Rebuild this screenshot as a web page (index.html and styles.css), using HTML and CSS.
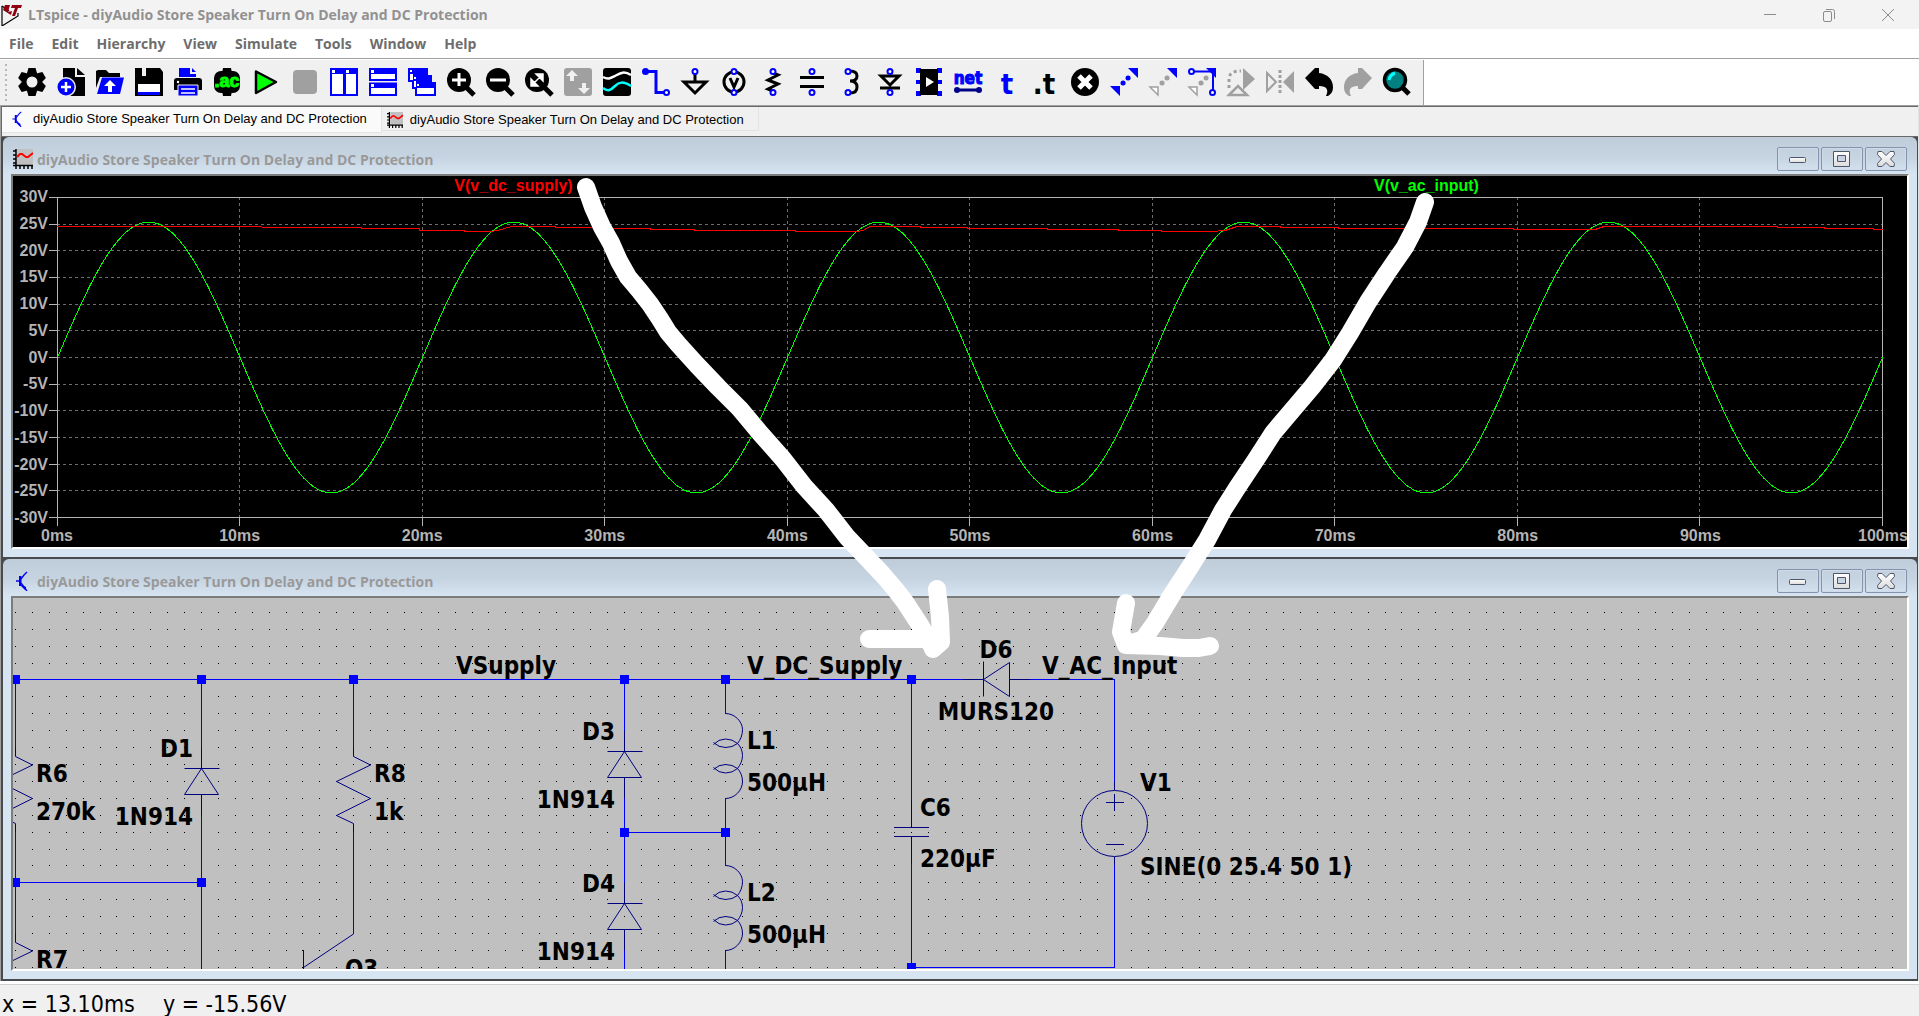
FILE: index.html
```html
<!DOCTYPE html>
<html lang="en">
<head>
<meta charset="utf-8">
<title>LTspice - diyAudio Store Speaker Turn On Delay and DC Protection</title>
<link rel="stylesheet" href="styles.css">
</head>
<body>
<svg class="defs" aria-hidden="true">
  <defs>
    <linearGradient id="glyph" x1="0" y1="0" x2="0" y2="1"><stop offset="0" stop-color="#fff"/><stop offset="1" stop-color="#dcdcdc"/></linearGradient>
    <symbol id="schematic-icon" viewBox="0 0 20 20"><path d="M3 10h4M8 8l3-4 3-3M8 12l3 4 3 4" fill="none" stroke="#0000f0" stroke-width="1.300"/><path d="M6 5h2.500v10H6zM9 14l4 2v3h-1l-4-4z" fill="#0000f0"/></symbol>
    <symbol id="plot-icon" viewBox="0 0 20 20"><path d="M4 0h16v16H4z" fill="#c0c0c0"/><path d="M3 0v20M0 16.500h20M0 2h3M0 6h3M0 10h3M0 14h3M7 17v3M11 17v3M15 17v3M19 17v3" fill="none" stroke="#000" stroke-width="1.500"/><path d="M4 8l3-3h2l4 3h2l5-4" fill="none" stroke="#f00" stroke-width="2"/></symbol>
    <symbol id="min-icon" viewBox="0 0 42 24"><rect x="12.500" y="10.500" width="16" height="5" rx="1" fill="url(#glyph)" stroke="#4f566b"/></symbol>
    <symbol id="max-icon" viewBox="0 0 42 24"><path fill-rule="evenodd" d="M12.500 4.500h16v15h-16zM16.500 8.500v6h8v-6z" fill="url(#glyph)" stroke="#4f566b"/></symbol>
    <symbol id="close-icon" viewBox="0 0 42 24"><path d="M13 4.500h4l4 4 4-4h4l.5 3-4 4.500 4 4.500-.5 3h-4l-4-4-4 4h-4l-.5-3 4-4.500-4-4.500z" fill="url(#glyph)" stroke="#4f566b"/></symbol>
  </defs>
</svg>

<header class="titlebar">
  <svg class="logo" viewBox="0 0 22 22" aria-hidden="true"><path d="M1 2v20L17 12V9" fill="none" stroke="#000" stroke-width="1.200"/><path d="M1 2l7 5" stroke="#000" stroke-width="1.200"/><path d="M4 1h5L7 8l4-1-1 4-8-5zM11 1h10l-1 3h-3l-3 8h-3l3-8h-4z" fill="#900010"/></svg>
  <h1>LTspice - diyAudio Store Speaker Turn On Delay and DC Protection</h1>
  <div class="window-controls">
    <button aria-label="Minimize"><svg viewBox="0 0 14 14"><path d="M1 6.500h12"/></svg></button>
    <button aria-label="Restore"><svg viewBox="0 0 14 14"><rect x="1.500" y="3.500" width="8" height="10" rx="1.500"/><path d="M4 1.500h6.500a2 2 0 0 1 2 2V11"/></svg></button>
    <button aria-label="Close"><svg viewBox="0 0 14 14"><path d="M1 1l12 12M13 1L1 13"/></svg></button>
  </div>
</header>

<nav class="menubar">
  <button>File</button><button>Edit</button><button>Hierarchy</button><button>View</button><button>Simulate</button><button>Tools</button><button>Window</button><button>Help</button>
</nav>

<div class="toolbar-row">
<div class="toolbar" role="toolbar" aria-label="Main">
  <span class="grip"></span>
  <button aria-label="Settings"><svg viewBox="0 0 28 28"><g id="cog"><path d="M9 5l1.500-5h7L19 5v18l-1.500 5h-7L9 23z"/><path transform="rotate(60 14 14)" d="M9 5l1.500-5h7L19 5v18l-1.500 5h-7L9 23z"/><path transform="rotate(120 14 14)" d="M9 5l1.500-5h7L19 5v18l-1.500 5h-7L9 23z"/></g><circle cx="14" cy="14" r="5.500" fill="#f0f0f0"/></svg></button>
  <button aria-label="New schematic"><svg viewBox="0 0 28 28"><path d="M6 0h12v9h10v19H6zM20 0l8 7h-8z"/><circle cx="9" cy="19" r="10" fill="#f0f0f0"/><circle cx="9" cy="19" r="8.500" fill="#00f"/><path d="M9 14v10M4 19h10" stroke="#fff" stroke-width="2.500"/></svg></button>
  <button aria-label="Open"><svg viewBox="0 0 28 28"><path d="M0 3l2-1h8l3 3h11v4H4L0 20z"/><path d="M6 9.500h22L24 26H1z" fill="#00f"/><path d="M14 12l6 6h-4v6h-4v-6H8z" fill="#fff"/></svg></button>
  <button aria-label="Save"><svg viewBox="0 0 28 28"><path d="M0 0h25l3 4v24H0z"/><path d="M7 0h4v8H7z" fill="#f0f0f0"/><path d="M3 16h22v8H3z" fill="#fff"/><path d="M3 24h22v3H3z" fill="#00f"/></svg></button>
  <button aria-label="Print"><svg viewBox="0 0 28 28"><path d="M5 0h11v6h6v3H5zM18 0l4 4h-4z" fill="#00f"/><path d="M0 13q0-3 3-3h22q3 0 3 3v9H0z"/><circle cx="4" cy="14" r="1.200" fill="#fff"/><path d="M4 17h20v11H4z" fill="#00f" stroke="#f0f0f0"/><path d="M7 21h14M7 25h14" stroke="#fff" stroke-width="1.500"/></svg></button>
  <button aria-label="Configure analysis"><svg viewBox="0 0 28 28"><path d="M9 5l1-5h8l1 5v18l-1 5h-8l-1-5z"/><rect x="1" y="3" width="26" height="22" rx="7"/><text x="14" y="19" class="ac" text-anchor="middle">.ac</text></svg></button>
  <button aria-label="Run"><svg viewBox="0 0 28 28"><path d="M4 3.500L24 14 4 25z" fill="#0f0" stroke="#000" stroke-width="2.500" stroke-linejoin="round"/></svg></button>
  <button aria-label="Stop"><svg viewBox="0 0 28 28"><rect x="2" y="2" width="24" height="24" rx="4" fill="#a0a0a0"/></svg></button>
  <button aria-label="Tile vertically"><svg viewBox="0 0 28 28"><path d="M0 0h28v28H0z" fill="#00f"/><path d="M2 6h11v20H2zM16 6h10v20H16zM2 2h3v3H2zM16 2h3v3h-3z" fill="#fff"/></svg></button>
  <button aria-label="Tile horizontally"><svg viewBox="0 0 28 28"><path d="M0 0h28v28H0z" fill="#00f"/><path d="M0 13h28v1.500H0z" fill="#f0f0f0"/><path d="M2 6h24v5H2zM2 20h24v6H2zM2 2h3v3H2zM2 16h3v3H2z" fill="#fff"/></svg></button>
  <button aria-label="Cascade"><svg viewBox="0 0 28 28"><path d="M0 0h20v7h4v7h4v14H7v-7H4v-7H0z" fill="#00f"/><path d="M2 2h2v2H2zM2 6h3v6H2zM6 9h2v2H6zM6 13h2v6H6zM9 16h2v2H9zM9 20h17v6H9z" fill="#fff"/></svg></button>
  <button aria-label="Zoom in"><svg viewBox="0 0 28 28"><path d="M17 17l10 10" stroke="#000" stroke-width="5"/><circle cx="12" cy="12" r="12"/><path d="M12 5v13M5 12h14" stroke="#fff" stroke-width="3"/></svg></button>
  <button aria-label="Zoom out"><svg viewBox="0 0 28 28"><path d="M17 17l10 10" stroke="#000" stroke-width="5"/><circle cx="12" cy="12" r="12"/><path d="M4 12h16" stroke="#fff" stroke-width="3"/></svg></button>
  <button aria-label="Zoom to fit"><svg viewBox="0 0 28 28"><path d="M17 17l10 10" stroke="#000" stroke-width="5"/><circle cx="12" cy="12" r="12"/><path d="M8 16l8-8M11 6h7v7zM6 11v7h7z" stroke="#fff" stroke-width="1.500" fill="#fff"/></svg></button>
  <button aria-label="Autorange"><svg viewBox="0 0 28 28"><rect width="28" height="28" rx="3" fill="#a0a0a0"/><path d="M8 2l6 6H10v5H6V8H2zM20 26l-6-6h4v-5h4v5h4z" fill="#f0f0f0"/></svg></button>
  <button aria-label="Waveform"><svg viewBox="0 0 28 28"><rect width="28" height="28" rx="3"/><path d="M0 9c5 3 8 1 12-1s8-6 16-1" fill="none" stroke="#fff" stroke-width="2.500"/><path d="M0 20c5 4 8 2 12-2s8-5 16 0" fill="none" stroke="#0ff" stroke-width="2.500"/></svg></button>
  <button aria-label="Wire"><svg viewBox="0 0 28 28"><path d="M4 3.500h10v21h8" fill="none" stroke="#00f" stroke-width="3"/><circle cx="3.500" cy="3.500" r="3.500" fill="#00f"/><circle cx="24.500" cy="24.500" r="2.500" class="pin"/></svg></button>
  <button aria-label="Ground"><svg viewBox="0 0 28 28"><path d="M14 5v9M3 14h22L14 25z" class="k"/><circle cx="14" cy="3.500" r="2.500" class="pin"/></svg></button>
  <button aria-label="Voltage source"><svg viewBox="0 0 28 28"><circle cx="14" cy="14" r="10" class="k"/><path d="M10 10l4 9 4-9" class="k"/><circle cx="14" cy="3.500" r="2.500" class="pin"/><circle cx="14" cy="24.500" r="2.500" class="pin"/></svg></button>
  <button aria-label="Resistor"><svg viewBox="0 0 28 28"><path d="M14 5l5 2-10 5 10 4-10 5 5 2" class="k"/><circle cx="14" cy="3.500" r="2.500" class="pin"/><circle cx="14" cy="24.500" r="2.500" class="pin"/></svg></button>
  <button aria-label="Capacitor"><svg viewBox="0 0 28 28"><path d="M2 9.500h24M2 18.500h24" class="k"/><circle cx="14" cy="3.500" r="2.500" class="pin"/><circle cx="14" cy="24.500" r="2.500" class="pin"/></svg></button>
  <button aria-label="Inductor"><svg viewBox="0 0 28 28"><path d="M13 3q7 0 7 5t-7 5q7 0 7 6t-7 6" class="k"/><circle cx="11" cy="3.500" r="2.500" class="pin"/><circle cx="11" cy="24.500" r="2.500" class="pin"/></svg></button>
  <button aria-label="Diode"><svg viewBox="0 0 28 28"><path d="M5 8h18l-9 9zM4 20h20" class="k"/><circle cx="14" cy="3.500" r="2.500" class="pin"/><circle cx="14" cy="24.500" r="2.500" class="pin"/></svg></button>
  <button aria-label="Component"><svg viewBox="0 0 28 28"><path d="M1 0h5v5H1zM22 0h5v5h-5zM1 12h5v4H1zM22 12h5v4h-5zM1 23h5v5H1zM22 23h5v5h-5z" fill="#00f"/><path d="M5 1h18v26H5z"/><path d="M11 9l8 5-8 5z" fill="#fff"/></svg></button>
  <button aria-label="Label net"><svg viewBox="0 0 28 28"><text x="14" y="16" class="net" text-anchor="middle">net</text><path d="M3 22h22" stroke="#00008b" stroke-width="3"/><circle cx="3" cy="22" r="3" fill="#00008b"/><circle cx="25" cy="22" r="3" fill="#00008b"/></svg></button>
  <button aria-label="Text"><svg viewBox="0 0 28 28"><text x="14" y="26" class="tee blue" text-anchor="middle">t</text></svg></button>
  <button aria-label="SPICE directive"><svg viewBox="0 0 28 28"><text x="12" y="26" class="tee" text-anchor="middle">.t</text></svg></button>
  <button aria-label="Delete"><svg viewBox="0 0 28 28"><circle cx="14" cy="14" r="14"/><path d="M8 8l12 12M20 8L8 20" stroke="#fff" stroke-width="5"/></svg></button>
  <button aria-label="Move"><svg viewBox="0 0 28 28"><path d="M18 0h10v10zM0 18h10v10z" fill="#00f"/><path d="M13 15h.1M18 10h.1" stroke="#00f" stroke-width="5" stroke-linecap="round"/></svg></button>
  <button aria-label="Drag"><svg viewBox="0 0 28 28"><path d="M18 0h10v10z" fill="#00f"/><path d="M1 19h8v8z" fill="#fff" stroke="#a0a0a0" stroke-width="1.500"/><path d="M13 15h.1M18 10h.1" stroke="#a0a0a0" stroke-width="5" stroke-linecap="round"/></svg></button>
  <button aria-label="Stretch"><svg viewBox="0 0 28 28"><path d="M18 0h10v10z" fill="#00f"/><path d="M4 3.500h21v21" fill="none" stroke="#00f" stroke-width="2"/><circle cx="3.500" cy="3.500" r="2.500" class="pin"/><circle cx="24.500" cy="24.500" r="2.500" class="pin"/><path d="M1 19h8v8z" fill="#fff" stroke="#a0a0a0" stroke-width="1.500"/><path d="M13 15h.1M18 10h.1" stroke="#a0a0a0" stroke-width="5" stroke-linecap="round"/></svg></button>
  <button aria-label="Rotate"><svg viewBox="0 0 28 28"><path d="M16 0l12 11-12 11z" fill="#a0a0a0"/><path d="M2 27l9-9 9 9z" fill="none" stroke="#a0a0a0" stroke-width="2.500"/><path d="M2 20v-9q0-8 12-8" fill="none" stroke="#a0a0a0" stroke-width="3" stroke-dasharray="3 3"/></svg></button>
  <button aria-label="Mirror"><svg viewBox="0 0 28 28"><path d="M28 3v22L17 14z" fill="#a0a0a0"/><path d="M1 5v18l9-9z" fill="none" stroke="#a0a0a0" stroke-width="2"/><path d="M14 2v25" stroke="#a0a0a0" stroke-width="3" stroke-dasharray="3 2"/></svg></button>
  <button aria-label="Undo"><svg viewBox="0 0 28 28"><path id="undo" d="M0 10L10 0h4v5c9 1 14 7 14 14 0 5-2 7-5 9h-2c3-6 1-10-7-10v3h-4z"/></svg></button>
  <button aria-label="Redo"><svg viewBox="0 0 28 28"><use href="#undo" transform="matrix(-1 0 0 1 28 0)" fill="#a0a0a0"/></svg></button>
  <button aria-label="Find"><svg viewBox="0 0 28 28"><path d="M17 17l9 9" stroke="#000" stroke-width="5"/><circle cx="12" cy="12" r="10.500" fill="#008080" stroke="#000" stroke-width="3.500"/><path d="M6 12q1-5 6-7" fill="none" stroke="#0ff" stroke-width="3"/></svg></button>
</div>
</div>

<main class="workspace">
  <div class="tabs" role="tablist">
    <button class="tab active" role="tab" aria-selected="true"><svg class="tab-icon"><use href="#schematic-icon"/></svg>diyAudio Store Speaker Turn On Delay and DC Protection</button>
    <button class="tab" role="tab"><svg class="tab-icon"><use href="#plot-icon"/></svg>diyAudio Store Speaker Turn On Delay and DC Protection</button>
  </div>

  <div class="mdi">
    <section class="window">
      <header class="caption">
        <svg class="caption-icon"><use href="#plot-icon"/></svg>
        <h2>diyAudio Store Speaker Turn On Delay and DC Protection</h2>
        <button aria-label="Minimize"><svg><use href="#min-icon"/></svg></button>
        <button aria-label="Maximize"><svg><use href="#max-icon"/></svg></button>
        <button aria-label="Close"><svg><use href="#close-icon"/></svg></button>
      </header>
      <div class="client plot">
        <div class="traces"><span class="trace-dc">V(v_dc_supply)</span><span class="trace-ac">V(v_ac_input)</span></div>
        <ol class="y-axis"><li>30V</li><li>25V</li><li>20V</li><li>15V</li><li>10V</li><li>5V</li><li>0V</li><li>-5V</li><li>-10V</li><li>-15V</li><li>-20V</li><li>-25V</li><li>-30V</li></ol>
        <svg class="graph" viewBox="0 0 1826 321" preserveAspectRatio="none">
          <path id="grid" class="grid-lines"/>
          <path id="ticks" class="frame"/>
          <path class="frame" d="M.5.5h1825v320H.5z"/>
          <path id="sine" class="sine"/>
          <path class="dc" d="M0 29.500H200L210 30.500H304V31.500H362V33.500H407V34.500H434L440 33.500 455 29.500H498V30.500H554V31.500H593V32.500H637V33.500H738V34.500H800L806 33.500 813 29.500H863V30.500H910V31.500H990V32.500H1061V33.500H1104V34.500H1155L1168 33.500 1180 29.500H1223V30.500H1281V31.500H1456V32.500H1538L1547 29.500H1720V30.500H1767V31.500H1816V32.500H1826"/>
        </svg>
        <ol class="x-axis"><li>0ms</li><li>10ms</li><li>20ms</li><li>30ms</li><li>40ms</li><li>50ms</li><li>60ms</li><li>70ms</li><li>80ms</li><li>90ms</li><li>100ms</li></ol>
      </div>
    </section>

    <section class="window">
      <header class="caption">
        <svg class="caption-icon"><use href="#schematic-icon"/></svg>
        <h2>diyAudio Store Speaker Turn On Delay and DC Protection</h2>
        <button aria-label="Minimize"><svg><use href="#min-icon"/></svg></button>
        <button aria-label="Maximize"><svg><use href="#max-icon"/></svg></button>
        <button aria-label="Close"><svg><use href="#close-icon"/></svg></button>
      </header>
      <div class="client schematic">
        <svg class="sheet">
          <defs>
            <path id="diode" d="M0-21V0M-17 0H18M0 0L-17 26H17zM0 26V47"/>
            <path id="resistor" d="M0-9V0L17 8.500-17 25 17 42-17 59 0 67V76"/>
            <path id="inductor" d="M0 0C9 0 17 8 17 16 17 22 15 26 12 30Q7 34 0 34-7 34-12 29M-12 31Q-7 25.500 0 25.500 7 25.500 12 30C15 33 17 37 17 42 17 47 15 51 12 55Q7 59.500 0 59.500-7 59.500-12 54M-12 56Q-7 51 0 51 7 51 12 55C15 58 17 63 17 68 17 77 9 85 0 85"/>
          </defs>
          <path id="dots" class="dots"/>
          <g transform="translate(-13 -598)">
            <g class="wires">
              <path d="M15 679.500H963M1030 679.500H1114.500V782M1114.500 865V967.500H911.500V864M911.500 679.500V800M15.500 679V748M15.500 832V934M201.500 679V748M201.500 815V969M15 882.500H201M353.500 679V748M353.500 832V934M624.500 679V731M624.500 798V883M624.500 950V969M725.500 679V714M725.500 798V866M725.500 951V969M624 832.500H725"/>
            </g>
            <g class="parts">
              <use href="#diode" x="201.500" y="768.500"/><use href="#diode" x="624.500" y="751.500"/><use href="#diode" x="624.500" y="903.500"/>
              <use href="#diode" transform="translate(983.500 679.500) rotate(-90)"/>
              <use href="#resistor" x="15.500" y="756.500"/><use href="#resistor" x="353.500" y="756.500"/><use href="#resistor" x="15.500" y="942.500"/>
              <use href="#inductor" x="725.500" y="713.500"/><use href="#inductor" x="725.500" y="865.500"/>
              <path d="M353.500 934L303.500 967.500M303.500 950V980M911.500 800V827.500M894 827.500H929M894 836.500H929M911.500 836.500V864M1114.500 782V790M1114.500 857V865M1106 802.500H1124M1114.500 794V811M1106 844.500H1124"/>
              <circle cx="1114.500" cy="823.500" r="33"/>
            </g>
            <path class="nodes" d="M11 675h9v9h-9zM197 675h9v9h-9zM349 675h9v9h-9zM620 675h9v9h-9zM721 675h9v9h-9zM907 675h9v9h-9zM11 878h9v9h-9zM197 878h9v9h-9zM620 828h9v9h-9zM721 828h9v9h-9zM907 963h9v9h-9z"/>
            <g class="labels">
              <text x="456" y="674">VSupply</text><text x="747" y="674">V_DC_Supply</text><text x="1042" y="674">V_AC_Input</text>
              <text x="193" y="757" text-anchor="end">D1</text><text x="193" y="825" text-anchor="end">1N914</text>
              <text x="615" y="740" text-anchor="end">D3</text><text x="615" y="808" text-anchor="end">1N914</text>
              <text x="615" y="892" text-anchor="end">D4</text><text x="615" y="960" text-anchor="end">1N914</text>
              <text x="36" y="782">R6</text><text x="36" y="820">270k</text><text x="36" y="968">R7</text>
              <text x="374" y="782">R8</text><text x="374" y="820">1k</text><text x="345" y="977">Q3</text>
              <text x="747" y="749">L1</text><text x="747" y="791">500µH</text><text x="747" y="901">L2</text><text x="747" y="943">500µH</text>
              <text x="920" y="816">C6</text><text x="920" y="867">220µF</text>
              <text x="996" y="658" text-anchor="middle">D6</text><text x="996" y="720" text-anchor="middle">MURS120</text>
              <text x="1140" y="791">V1</text><text x="1140" y="875">SINE(0 25.4 50 1)</text>
            </g>
          </g>
        </svg>
      </div>
    </section>
  </div>
</main>

<footer class="status"><span>x = 13.10ms</span><span>y = -15.56V</span></footer>

<svg class="annotations" viewBox="0 0 1919 1016" preserveAspectRatio="none" aria-hidden="true">
  <path d="M586 187L593 207 602 227 611 243 619 261 628 277 639 290 650 304 660 319 668 332 678 344 697 365 718 387 740 409 760 433 783 459 804 486 826 510 847 537 868 559 883 575 895 589 905 602 920 625 933 648M937 589L940 617 941 642 933 649M869 639H925L941 642"/>
  <path d="M1425 202L1418 222 1405 247 1387 273 1368 302 1350 333 1333 360 1312 387 1295 407 1273 433 1255 461 1237 488 1223 510 1207 540 1190 567 1173 593 1155 623 1142 641M1126 603L1121 632 1126 645 1160 646 1183 648 1199 648 1210 646M1128 644L1148 638"/>
</svg>
<script src="script.js"></script>
</body>
</html>
```
FILE: styles.css
```css
* { box-sizing: border-box; }

body {
  margin: 0;
  height: 100vh;
  display: flex;
  flex-direction: column;
  overflow: hidden;
  position: relative;
  background: #f0f0f0;
  font-family: "Open Sans", "Noto Sans", sans-serif;
  font-size: 14px;
}

button {
  border: 0;
  padding: 0;
  background: none;
  font: inherit;
  color: inherit;
}

h1, h2 { margin: 0; font-size: 14px; font-weight: 700; line-height: 20px; white-space: nowrap; }
ol { list-style: none; margin: 0; padding: 0; }
svg { display: block; }
.defs { position: absolute; width: 0; height: 0; }

/* Application title and menu */
.titlebar {
  flex: none;
  height: 29px;
  display: flex;
  align-items: center;
  gap: 5px;
  padding-left: 1px;
  background: #f3f3f3;
  color: #919191;
}
.logo { width: 22px; height: 22px; }
.window-controls { margin-left: auto; display: flex; padding-right: 2px; }
.window-controls button { width: 59px; display: grid; place-items: center; }
.window-controls svg { width: 14px; height: 14px; fill: none; stroke: #8c8c8c; }

.menubar {
  flex: none;
  height: 30px;
  display: flex;
  background: #fff;
  border-bottom: 1px solid #a0a0a0;
  color: #6d6d6d;
  font-weight: 700;
}
.menubar button { padding: 0 9px; }

/* Toolbar */
.toolbar-row { flex: none; display: flex; padding-top: 1px; background: #fff; }
.toolbar {
  height: 45px;
  display: flex;
  align-items: center;
  gap: 11px;
  padding: 0 12px 1px 5px;
  background: #f0f0f0;
  border-right: 1px solid #a0a0a0;
}
.toolbar button { width: 28px; height: 28px; }
.toolbar svg { width: 28px; height: 28px; overflow: visible; }
.grip { width: 2px; height: 37px; background: repeating-linear-gradient(#b8b8b8 0 2px, transparent 2px 5px); }
.k { fill: none; stroke: #000; stroke-width: 3; }
.pin { fill: #fff; stroke: #00f; stroke-width: 2; }
.ac { font: 700 18px "Liberation Sans", sans-serif; fill: #0f0; stroke: #0f0; }
.net { font: 700 17px "DejaVu Sans Condensed", "DejaVu Sans", sans-serif; fill: #00f; stroke: #00f; }
.tee { font: 700 29px "DejaVu Sans Condensed", "DejaVu Sans", sans-serif; }
.blue { fill: #00f; }

/* Workspace */
.workspace {
  flex: 1;
  min-height: 0;
  display: flex;
  flex-direction: column;
  border-top: 1px solid #a0a0a0;
  border-left: 1px solid #a0a0a0;
  border-right: 1px solid #e3e3e3;
}
.tabs {
  flex: none;
  height: 31px;
  display: flex;
  align-items: flex-start;
  border-top: 1px solid #696969;
  border-left: 1px solid #696969;
  border-bottom: 1px solid #696969;
  font: 13px/20px "Liberation Sans", Arial, sans-serif;
}
.tab {
  height: 24px;
  display: flex;
  align-items: center;
  gap: 7px;
  padding: 3px 14px 0 5px;
  border: 1px solid #e3e3e3;
  border-width: 0 1px 1px 0;
  white-space: nowrap;
}
.tab.active { height: 26px; padding: 0 14px 2px 8px; background: #fafafa; }
.tab-icon { width: 16px; height: 16px; }

.mdi {
  flex: 1;
  min-height: 0;
  display: grid;
  grid-template-rows: 1fr 1fr;
  gap: 2px;
  padding: 0 1px 2px 2px;
  background: #484c4e;
}
.window {
  min-width: 0;
  min-height: 0;
  display: flex;
  flex-direction: column;
  padding: 0 8px 8px;
  border-radius: 6px 6px 0 0;
  background: linear-gradient(#bfcddb, #c6d4e2 20px, #d7e4f2 37px);
}
.caption { flex: none; height: 37px; display: flex; align-items: center; gap: 2px; color: #999; }
.caption h2 { flex: 1; padding: 9px 0 0 2px; }
.caption-icon { width: 20px; height: 20px; margin: 6px 0 0 2px; }
.caption button {
  width: 42px;
  height: 24px;
  margin-top: 7px;
  border: 1px solid #8592ad;
  border-radius: 2px;
  box-shadow: inset 0 0 0 1px #cfdbe8;
}
.caption button:last-child { margin-right: 2px; }
.caption button svg { width: 42px; height: 24px; margin: -1px; }
.client {
  flex: 1;
  min-height: 0;
  border: 2px solid;
  border-color: #7c7c7c #fff #fff #7c7c7c;
  overflow: hidden;
}

/* Waveform pane */
.plot {
  display: grid;
  grid-template: 21px 1fr 29px / 44px 1fr 24px;
  background: #000;
  color: #b4b4b4;
  font: 700 16px/20px "Liberation Sans", Arial, sans-serif;
}
.traces { grid-area: 1 / 2; display: grid; grid-template-columns: 1fr 1fr; text-align: center; }
.trace-dc { color: #f00; }
.trace-ac { color: #0f0; }
.y-axis {
  grid-area: 2 / 1;
  margin: -10px 0;
  padding-right: 9px;
  display: flex;
  flex-direction: column;
  justify-content: space-between;
  text-align: right;
}
.graph { grid-area: 2 / 2; width: 100%; height: 100%; overflow: visible; shape-rendering: crispEdges; }
.graph path { fill: none; vector-effect: non-scaling-stroke; }
.grid-lines { stroke: #6c6c6c; stroke-dasharray: 3 3; }
.frame { stroke: #b4b4b4; }
.sine { stroke: #0f0; }
.dc { stroke: #f00; }
.x-axis { grid-area: 3 / 2; padding-top: 8px; display: flex; justify-content: space-between; }
.x-axis li { width: 0; display: flex; justify-content: center; }

/* Schematic pane */
.schematic { background: #c0c0c0; }
.sheet { width: 100%; height: 100%; }
.dots { fill: #000; shape-rendering: crispEdges; }
.wires { fill: none; stroke: #00f; shape-rendering: crispEdges; }
.parts { fill: none; stroke: #000080; }
.nodes { fill: #00f; }
.labels { font: 700 24px "DejaVu Sans Condensed", "DejaVu Sans", sans-serif; }

.status {
  flex: none;
  height: 35px;
  display: flex;
  align-items: center;
  gap: 28px;
  padding: 7px 2px 0;
  border-top: 3px solid #fff;
  box-shadow: inset 0 1px #d0d0d0;
  font: 23px/24px "DejaVu Sans Condensed", "DejaVu Sans", sans-serif;
}

/* Hand-drawn arrows lying over both windows */
.annotations { position: absolute; inset: 0; width: 100%; height: 100%; pointer-events: none; }
.annotations path { fill: none; stroke: #fff; stroke-width: 18; stroke-linecap: round; stroke-linejoin: round; }
```
FILE: script.js
```js
// Plot area in graph units: 100 ms across, -30 V to 30 V.
const W = 1825, H = 320;
let grid = '', ticks = '', sine = '';
for (let i = 0; i <= 10; i++) {
  const x = Math.floor(i * W / 10) + 0.5;
  if (i > 0 && i < 10) grid += `M${x} 0V${H}`;
  ticks += `M${x} ${H}v9`;
}
for (let i = 0; i <= 12; i++) {
  const y = Math.round(i * H / 12) + 0.5;
  if (i > 0 && i < 12) grid += `M0 ${y}H${W}`;
  ticks += `M-8 ${y}h8`;
}
for (let t = 0; t <= 100; t += 0.25) {
  const v = 25.4 * Math.sin(2 * Math.PI * 50 * t / 1000);
  sine += `${t ? 'L' : 'M'}${(t * W / 100 + 0.5).toFixed(1)} ${(H / 2 + 0.5 - v * H / 60).toFixed(1)}`;
}
document.getElementById('grid').setAttribute('d', grid);
document.getElementById('ticks').setAttribute('d', ticks);
document.getElementById('sine').setAttribute('d', sine);

// Snap-grid dots fill whatever size the sheet has.
function drawDots() {
  const sheet = document.querySelector('.sheet').getBoundingClientRect();
  const step = 16.908;
  let d = '';
  for (let y = 14.3; y < sheet.height; y += step)
    for (let x = 2.5; x < sheet.width - 4; x += step)
      d += `M${Math.floor(x)} ${Math.floor(y)}h1v1h-1z`;
  document.getElementById('dots').setAttribute('d', d);
}
drawDots();
window.addEventListener('resize', drawDots);
```
